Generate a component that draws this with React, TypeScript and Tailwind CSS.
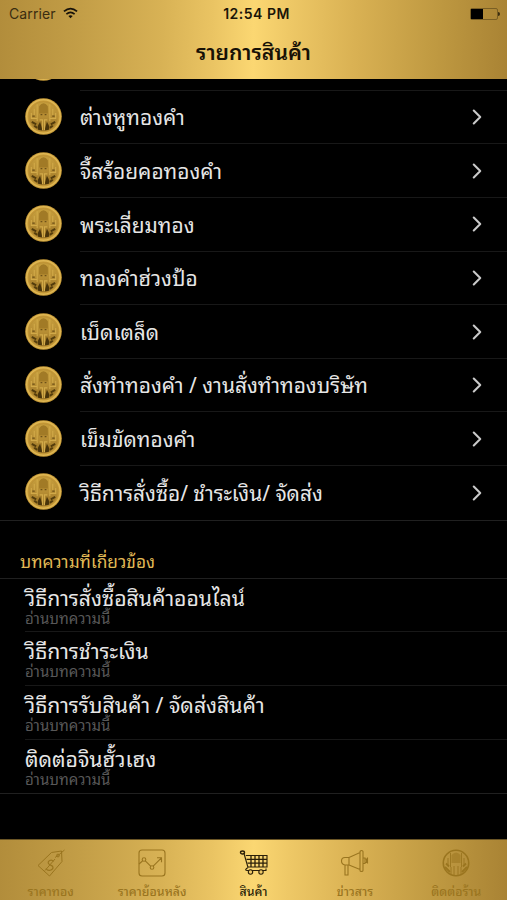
import { useId } from 'react';
import { ChevronRight } from 'lucide-react';

// first entry is scrolled under the header, only its coin peeks out
const categories = [
  '',
  'ต่างหูทองคำ',
  'จี้สร้อยคอทองคำ',
  'พระเลี่ยมทอง',
  'ทองคำฮ่วงป้อ',
  'เบ็ดเตล็ด',
  'สั่งทำทองคำ / งานสั่งทำทองบริษัท',
  'เข็มขัดทองคำ',
  'วิธีการสั่งซื้อ/ ชำระเงิน/ จัดส่ง',
];

const articles = [
  'วิธีการสั่งซื้อสินค้าออนไลน์',
  'วิธีการชำระเงิน',
  'วิธีการรับสินค้า / จัดส่งสินค้า',
  'ติดต่อจินฮั้วเฮง',
];

const goldBar =
  'bg-[linear-gradient(91deg,#b28d3b_0%,#c39e47_16%,#d8b255_32%,#eac463_42%,#fbd772_50%,#eec866_57%,#d9b153_70%,#bf9941_86%,#a98334_100%)]';

function Coin() {
  const id = useId();
  return (
    <svg className="-mt-[2px] size-[37px] shrink-0" viewBox="0 0 38 38" fill="none">
      <defs>
        <linearGradient id={id} x1="0" y1="0" x2="0" y2="1">
          <stop offset="0" stopColor="#c79f3d" />
          <stop offset="0.55" stopColor="#b58c33" />
          <stop offset="1" stopColor="#8f6a20" />
        </linearGradient>
      </defs>
      <circle cx="19" cy="19" r="18.800" fill="#c49836" />
      <circle cx="19" cy="19" r="17.200" stroke="#dfb754" strokeWidth="1.500" />
      <circle cx="19" cy="19" r="15" fill={`url(#${id})`} stroke="#b78e36" strokeWidth="0.600" />
      {/* petals at the foot */}
      <path d="M7 24.500l4.500 2.500M9.500 28.500l3 2M31 24.500l-4.500 2.500M28.500 28.500l-3 2" stroke="#533c0c" strokeWidth="2" />
      <path d="M13.500 32.500c-1-4 .5-5 2-8l2.500 9zM24.500 32.500c1-4-.5-5-2-8l-2.500 9z" fill="#48330a" />
      {/* dome and pillars */}
      <path d="M14.500 16V8.500q4.500-6 9 0V16z" fill="#a17a26" />
      <path d="M12.500 6.500V24M25.500 6.500V24M9.500 11v7M28.500 11v7M6.500 15.500V21h6M31.500 15.500V21h-6" stroke="#d2aa49" strokeWidth="1.100" />
      <path d="M15 22.500h3v10.500M23 22.500h-3v10.500" stroke="#d2aa49" strokeWidth="1.200" />
      <path d="M16 17h1.800M20.200 17H22M7.500 18.500H10M28 18.500h2.500" stroke="#6c5018" strokeWidth="1.300" />
    </svg>
  );
}

function TagIcon() {
  return (
    <svg className="size-[30px]" viewBox="0 0 30 30" fill="none" stroke="currentColor" strokeWidth="1">
      <path d="M2 17.500L15.500 4.500l10-1.500.500 10.500L13.500 28z" strokeLinejoin="round" />
      <circle cx="22" cy="7.500" r="1.400" />
      <path d="M19 9.500l3-2 6.500-5.500" />
      <path d="M17.500 13.500c-2-3-6.500-.5-5 2s4.500 1.500 4.500 4-5 4.500-7 1" strokeWidth="1.200" />
      <path d="M9 22.500L19 11" strokeWidth="1" />
    </svg>
  );
}

function HistoryIcon() {
  return (
    <svg className="size-[30px]" viewBox="0 0 30 30" fill="none" stroke="currentColor" strokeWidth="1.100">
      <rect x="2" y="2" width="26" height="26" rx="3" />
      <circle cx="7" cy="11.500" r="1.800" />
      <circle cx="15" cy="19.500" r="1.800" />
      <path d="M2 16l3.500-3M8.300 12.800l5.300 5.300M16.200 18.100l8-8M20 9.800h4.500v4.500" />
    </svg>
  );
}

function CartIcon() {
  return (
    <svg className="ml-[2px] size-[30px]" viewBox="0 0 30 30" fill="none" stroke="currentColor" strokeWidth="1.100">
      <ellipse cx="3.500" cy="4.500" rx="2" ry="1.500" strokeWidth="1.400" />
      <path d="M5 5.500L9 19.500M9 19.500q-4 2.500-1 3h19v-2" />
      <path d="M6.800 7.500h21.200v11.500H9" />
      <path d="M7.500 11.300h20.500M8.500 15.200h19.500M12 7.500v11.500M16 7.500v11.500M20 7.500v11.500M24 7.500v11.500" strokeWidth="1.300" />
      <circle cx="11.500" cy="24" r="2.200" fill="#f0ca68" />
      <circle cx="22" cy="24" r="2.200" fill="#f0ca68" />
    </svg>
  );
}

function NewsIcon() {
  return (
    <svg className="size-[30px]" viewBox="0 0 30 30" fill="none" stroke="currentColor" strokeWidth="1.100">
      <path d="M9 9.500H5q-3.500 0-3.500 3.500T5 17h4zM9 9.500L20 4.500v17L9 17M20 3.500q0-1 1.500-1t1.500 1v19q0 1-1.500 1t-1.500-1zM5 17v10h3V17M23 10h2v5.500h-2M25 11h1.500v3.500H25M27.500 9.500v6" />
    </svg>
  );
}

function ShopIcon() {
  return (
    <svg className="size-[30px]" viewBox="0 0 30 30" fill="none" stroke="currentColor">
      <circle cx="15" cy="15" r="12.700" strokeWidth="1.600" />
      <path d="M10.500 15V7q4.500-5 9 0v8z" fill="currentColor" opacity="0.550" stroke="none" />
      <path d="M9.500 5v14M20.500 5v14M7 10v7M23 10v7M13 18v9M17 18v9M10 19v7M20 19v7" strokeWidth="0.900" />
      <path d="M4 19l5 5M26 19l-5 5M5 15.500l3 3M25 15.500l-3 3" strokeWidth="1.800" />
    </svg>
  );
}

const tabs = [
  { label: 'ราคาทอง', icon: TagIcon, active: false },
  { label: 'ราคาย้อนหลัง', icon: HistoryIcon, active: false },
  { label: 'สินค้า', icon: CartIcon, active: true },
  { label: 'ข่าวสาร', icon: NewsIcon, active: false },
  { label: 'ติดต่อร้าน', icon: ShopIcon, active: false },
];

function StatusBar() {
  return (
    <div className="grid h-[27px] grid-cols-3 items-center pr-[7px] pl-[9px] font-['Inter',sans-serif]">
      <div className="flex items-center gap-[7px]">
        <span className="text-[14px] tracking-[0.100px] text-[#3a2d10]">Carrier</span>
        <svg className="-mt-[2px] h-[12px] w-[15px]" viewBox="0 0 16 12" fill="none" stroke="#17120a" strokeWidth="1.800">
          <path d="M1 4.300q7-6 14 0M3.600 7.200q4.400-3.800 8.800 0" />
          <path d="M5.700 9.300q2.300-1.900 4.600 0L8 11.700z" fill="#17120a" stroke="none" />
        </svg>
      </div>
      <span className="pl-[4px] text-center text-[14px] font-semibold tracking-[0.500px] text-[#1b1508]">12:54 PM</span>
      <div className="flex items-center justify-end">
        <div className="h-[12px] w-[28px] rounded-[2px] border border-[#7a5f24]">
          <div className="h-full w-[12px] bg-black" />
        </div>
        <div className="h-1 w-[2px] rounded-r bg-[#3a2c0e]" />
      </div>
    </div>
  );
}

export default function App() {
  return (
    <div className="flex h-[900px] w-[507px] flex-col overflow-hidden bg-black font-['Noto_Sans_Thai_Looped','Noto_Sans',sans-serif]">
      <header className={`h-[79px] shrink-0 ${goldBar}`}>
        <StatusBar />
        <h1 className="flex h-[47px] items-center justify-center text-[21.200px] font-semibold text-[#171106]">
          <span>รายการสินค้า</span>
        </h1>
      </header>

      <main className="min-h-0 flex-1 overflow-hidden">
        <ul className="-mt-[42px] border-b border-[#202020]">
          {categories.map((label, i) => (
            <li key={i} className="flex h-[53.650px] items-center pl-[25px]">
              <Coin />
              <div
                className={`ml-[18px] flex h-full flex-1 items-center justify-between pr-[21px] ${
                  i < categories.length - 1 ? 'border-b border-[#181818]' : ''
                }`}
              >
                <span className="-mt-[2px] text-[20.900px] whitespace-nowrap text-[#e6e6e6]">{label}</span>
                <ChevronRight className="-mr-[4px] size-[26px] text-[#c9c9c9]" strokeWidth={1.900} />
              </div>
            </li>
          ))}
        </ul>

        <h2 className="flex h-[57px] items-end pb-[6px] pl-[20px] text-[17.300px] leading-6 text-[#e0b955]">
          <span>บทความที่เกี่ยวข้อง</span>
        </h2>
        <ul className="border-y border-[#202020]">
          {articles.map((title, i) => (
            <li key={title} className="h-[53.600px] pl-[25px]">
              <div
                className={`flex h-full flex-col pt-[3px] whitespace-nowrap ${
                  i < articles.length - 1 ? 'border-b border-[#181818]' : ''
                }`}
              >
                <span className="self-start text-[21.200px] leading-[28px] text-[#e6e6e6]">{title}</span>
                <span className="self-start text-[15px] leading-[14px] text-[#585858]">อ่านบทความนี้</span>
              </div>
            </li>
          ))}
        </ul>
      </main>

      <nav className={`grid h-[61px] shrink-0 grid-cols-5 border-t border-[#6b5525] ${goldBar}`}>
        {tabs.map(({ label, icon: Icon, active }) => (
          <div
            key={label}
            className={`flex flex-col items-center pt-[8px] ${active ? 'text-[#2b1f08]' : 'text-[#9a751f]'}`}
          >
            <Icon />
            <span className="text-[12.300px] leading-[25px] font-medium whitespace-nowrap">{label}</span>
          </div>
        ))}
      </nav>
    </div>
  );
}
